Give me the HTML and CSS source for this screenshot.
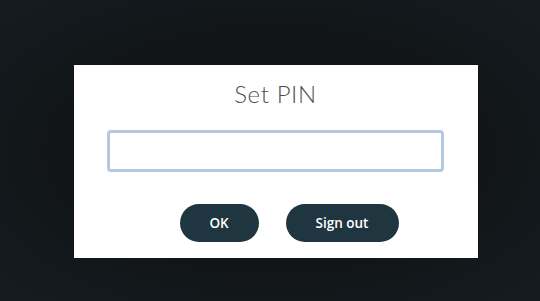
FILE: index.html
```html
<!DOCTYPE html>
<html>
<head>
<meta charset="utf-8">
<link rel="stylesheet" href="styles.css">
</head>
<body>
<div class="backdrop">
  <div class="dialog">
    <h1 class="title">Set PIN</h1>
    <input class="pin-input" type="password">
    <div class="actions">
      <button class="btn">OK</button>
      <button class="btn btn-wide">Sign out</button>
    </div>
  </div>
</div>
</body>
</html>
```
FILE: styles.css
```css
html, body {
  margin: 0;
  padding: 0;
  height: 301px;
  overflow: hidden;
}
.backdrop {
  width: 540px;
  height: 301px;
  background: radial-gradient(ellipse at 50% 50%, #101417 0%, #111518 55%, #151c20 100%);
  padding: 65px 0 0 74px;
  box-sizing: border-box;
}
.dialog {
  width: 404px;
  height: 193px;
  background: #ffffff;
  box-sizing: border-box;
  padding: 17px 34px 0 33px;
  display: flex;
  flex-direction: column;
  align-items: stretch;
}
.title {
  margin: 0;
  font-family: "Lato", "Open Sans", sans-serif;
  font-weight: 300;
  font-size: 24px;
  line-height: 24px;
  letter-spacing: 0.6px;
  color: #505050;
  text-align: center;
}
.pin-input {
  margin: 24px 0 0 0;
  height: 42px;
  box-sizing: border-box;
  border: 3px solid #b5c8e2;
  border-radius: 4px;
  outline: none;
  background: #fff;
  padding: 0 8px;
}
.actions {
  margin-top: 32px;
  display: flex;
  justify-content: center;
}
.btn {
  margin-left: 27px;
  width: 79px;
  height: 38px;
  border: none;
  border-radius: 19px;
  background: #1f3641;
  color: #ffffff;
  font-family: "Open Sans", "Lato", sans-serif;
  font-weight: 600;
  font-size: 13.5px;
  padding: 0;
}
.btn-wide {
  width: 113px;
}
```
